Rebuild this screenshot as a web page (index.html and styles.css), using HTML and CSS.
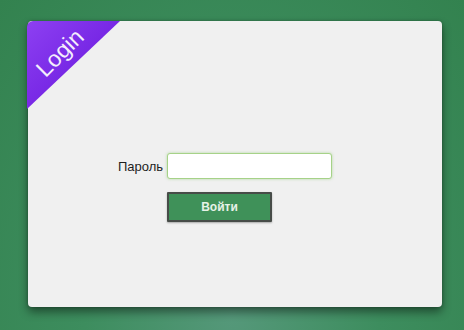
FILE: index.html
```html
<!DOCTYPE html>
<html lang="ru">
<head>
    <meta charset="UTF-8">
    <title>Login</title>
    <link rel="stylesheet" href="styles.css">
</head>
<body>
    <div class="card">
        <div class="ribbon"><span class="ribbon-text">Login</span></div>

        <form class="login-form">
            <label class="field-label" for="password">Пароль</label>
            <input class="field-input" type="password" id="password" autofocus>
            <span></span>
            <button class="submit-button" type="button">Войти</button>
        </form>
    </div>
</body>
</html>
```

FILE: styles.css
```css
/* General */
html, body {
    height: 100%;
}

body {
    margin: 0;
    padding: 21px 22px 23px 28px;
    box-sizing: border-box;
    font-family: 'Liberation Sans', Arial, sans-serif;
    background-color: #3a8c5a;
    background-image: radial-gradient(ellipse at 50% 95%, #55987a 0%, #3d8d5e 45%, #33824f 100%);
}

/* Card */
.card {
    position: relative;
    height: 100%;
    background: #f0f0f0;
    border-radius: 4px;
    box-shadow: 0 5px 10px rgba(0, 0, 0, 0.45), 0 0 3px rgba(0, 0, 0, 0.25);
    padding: 132px 0 0 84px;
    box-sizing: border-box;
}

/* Corner ribbon */
.ribbon {
    position: absolute;
    top: 0;
    left: -1px;
    width: 93px;
    height: 88px;
    border-top-left-radius: 6px;
    background: linear-gradient(135deg, #8d40f2 0%, #7626e4 55%, #6c1adc 100%);
    clip-path: polygon(0 0, 100% 0, 0 100%);
}

.ribbon-text {
    position: absolute;
    left: 33px;
    top: 32px;
    transform: translate(-50%, -50%) rotate(-45deg);
    color: #f4eefc;
    font-family: 'Liberation Sans', Arial, sans-serif;
    font-size: 23px;
    line-height: 1;
}

/* Form */
.login-form {
    display: grid;
    grid-template-columns: 51px 165px;
    column-gap: 4px;
    row-gap: 13px;
    align-items: center;
}

.field-label {
    font-size: 13px;
    color: #1e1e1e;
    text-align: right;
}

.field-input {
    box-sizing: border-box;
    height: 26px;
    width: 165px;
    margin: 0;
    padding: 0 5px;
    background: #fff;
    border: 1.5px solid #a6d288;
    border-radius: 3px;
    box-shadow: 0 0 3px rgba(140, 200, 110, 0.6);
    caret-color: #666;
    outline: none;
}

.submit-button {
    width: 105px;
    height: 30px;
    padding: 0;
    background: #3f9159;
    border: 2px solid #474c48;
    border-radius: 1px;
    box-shadow: 0 1px 2px rgba(0, 0, 0, 0.3);
    color: #e6f2e8;
    font-family: 'Liberation Sans', Arial, sans-serif;
    font-size: 12px;
    font-weight: bold;
    cursor: pointer;
}
```
